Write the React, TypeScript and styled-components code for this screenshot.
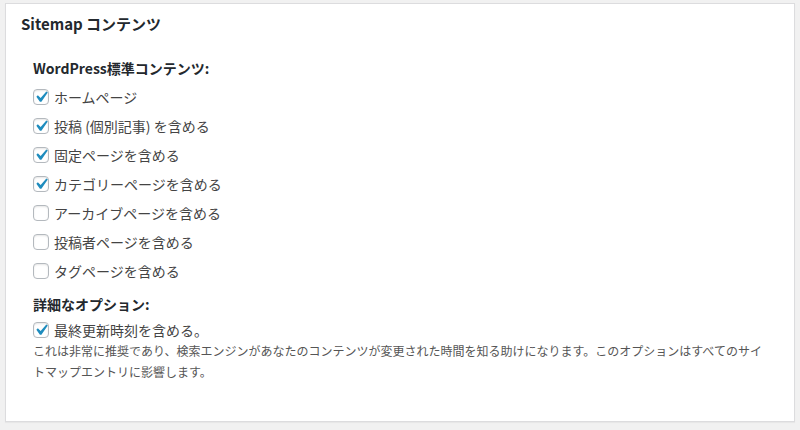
import styled, { createGlobalStyle } from "styled-components"

const GlobalStyle = createGlobalStyle`
  html, body {
    margin: 0;
    padding: 0;
    background: #f1f1f1;
  }
  body {
    font-family: "Segoe UI", "Noto Sans CJK JP", "Noto Sans", sans-serif;
    color: #444;
  }
`

const Page = styled.div`
  padding: 3px 5px 6px 5px;
`

const Panel = styled.section`
  background: #fff;
  border: 1px solid #dcdcde;
  box-shadow: 0 1px 1px rgba(0, 0, 0, 0.04);
  height: 419px;
  box-sizing: border-box;
`

const Title = styled.h2`
  margin: 0;
  padding: 10px 15px 0 15px;
  font-size: 15px;
  line-height: 20px;
  font-weight: 600;
  color: #23282d;
`

const Body = styled.div`
  padding: 24px 31px 0 27px;
`

const Heading = styled.h3<{ $gap?: number }>`
  margin: ${p => p.$gap ?? 0}px 0 4px 0;
  font-size: 14px;
  line-height: 20px;
  font-weight: 700;
  color: #23282d;
`

const Row = styled.label<{ $compact?: boolean }>`
  display: flex;
  align-items: center;
  gap: 5px;
  height: ${p => (p.$compact ? 24 : 29)}px;
  font-size: 14px;
  color: #444;
  cursor: pointer;
`

const Box = styled.span`
  position: relative;
  width: 16px;
  height: 16px;
  box-sizing: border-box;
  border: 1px solid #b4b9be;
  border-radius: 4px;
  background: #fff;
  box-shadow: inset 0 1px 2px rgba(0, 0, 0, 0.1);
  flex-shrink: 0;

  svg {
    position: absolute;
    left: -4px;
    top: -4px;
    width: 22px;
    height: 22px;
  }
`

const Description = styled.p`
  margin: -2px 0 0 0;
  font-size: 12px;
  line-height: 21px;
  color: #555;
`

const Check = ({ on }: { on: boolean }) => (
  <Box>
    {on && (
      <svg viewBox="0 0 20 20" aria-hidden="true">
        <path d="M14.83 4.89l1.34.94-5.81 8.38H9.02L5.78 9.67l1.34-1.25 2.57 2.4z" fill="#1e8cbe" />
      </svg>
    )}
  </Box>
)

const items: { label: string; on: boolean }[] = [
  { label: "ホームページ", on: true },
  { label: "投稿 (個別記事) を含める", on: true },
  { label: "固定ページを含める", on: true },
  { label: "カテゴリーページを含める", on: true },
  { label: "アーカイブページを含める", on: false },
  { label: "投稿者ページを含める", on: false },
  { label: "タグページを含める", on: false },
]

const App = () => {
  return (
    <Page>
      <GlobalStyle />
      <Panel>
        <Title>Sitemap コンテンツ</Title>
        <Body>
          <Heading>WordPress標準コンテンツ:</Heading>
          {items.map(item => (
            <Row key={item.label}>
              <Check on={item.on} />
              {item.label}
            </Row>
          ))}
          <Heading $gap={9}>詳細なオプション:</Heading>
          <Row $compact>
            <Check on={true} />
            最終更新時刻を含める。
          </Row>
          <Description>
            これは非常に推奨であり、検索エンジンがあなたのコンテンツが変更された時間を知る助けになります。このオプションはすべてのサイトマップエントリに影響します。
          </Description>
        </Body>
      </Panel>
    </Page>
  )
}

export default App
